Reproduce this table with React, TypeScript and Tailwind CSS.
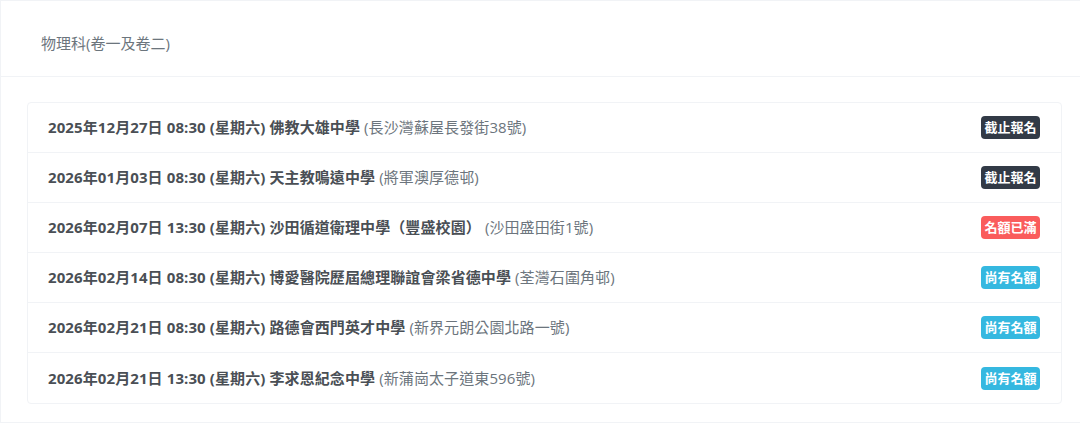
import React from "react";

type Row = { date: string; school: string; addr: string; status: "closed" | "full" | "open" };

const rows: Row[] = [
  { date: "2025年12月27日 08:30 (星期六)", school: "佛教大雄中學", addr: "(長沙灣蘇屋長發街38號)", status: "closed" },
  { date: "2026年01月03日 08:30 (星期六)", school: "天主教鳴遠中學", addr: "(將軍澳厚德邨)", status: "closed" },
  { date: "2026年02月07日 13:30 (星期六)", school: "沙田循道衛理中學（豐盛校園）", addr: "(沙田盛田街1號)", status: "full" },
  { date: "2026年02月14日 08:30 (星期六)", school: "博愛醫院歷屆總理聯誼會梁省德中學", addr: "(荃灣石圍角邨)", status: "open" },
  { date: "2026年02月21日 08:30 (星期六)", school: "路德會西門英才中學", addr: "(新界元朗公園北路一號)", status: "open" },
  { date: "2026年02月21日 13:30 (星期六)", school: "李求恩紀念中學", addr: "(新蒲崗太子道東596號)", status: "open" },
];

function Badge({ status }: { status: Row["status"] }) {
  const base = "rounded-[4px] w-[59px] h-[23px] flex items-center justify-center text-[13px] font-bold text-white leading-none";
  if (status === "closed") return <span className={`${base} bg-[#323a46]`}>截止報名</span>;
  if (status === "full") return <span className={`${base} bg-[#fa5c5c]`}>名額已滿</span>;
  return <span className={`${base} bg-[#35b8e0]`}>尚有名額</span>;
}

export default function App() {
  return (
    <div
      className="w-[1080px] h-[423px] overflow-hidden bg-white"
      style={{ fontFamily: '"Open Sans", "Noto Sans CJK TC", sans-serif' }}
    >
      <div className="h-[423px] border-l border-t border-b border-[#f1f3f6] bg-white">
        <div className="h-[76px] border-b border-[#f1f3f6] pl-10 flex items-center">
          <span className="text-[15px] text-[#6c757d] pt-[10px]">物理科(卷一及卷二)</span>
        </div>
        <div className="pt-[25px] pl-[26px] pr-[18px]">
          <div className="border border-[#f1f3f6] rounded-[4px]">
            {rows.map((r, i) => (
              <div
                key={i}
                className={`h-[50px] flex items-center justify-between pl-5 pr-[21px] ${i < rows.length - 1 ? "border-b border-[#f1f3f6]" : ""}`}
              >
                <div className="text-[15px] text-[#4a4f55] tracking-[0.1px]">
                  <span className="font-bold">{r.date} {r.school}</span>{" "}
                  <span className="text-[#6c757d]">{r.addr}</span>
                </div>
                <Badge status={r.status} />
              </div>
            ))}
          </div>
        </div>
      </div>
    </div>
  );
}
